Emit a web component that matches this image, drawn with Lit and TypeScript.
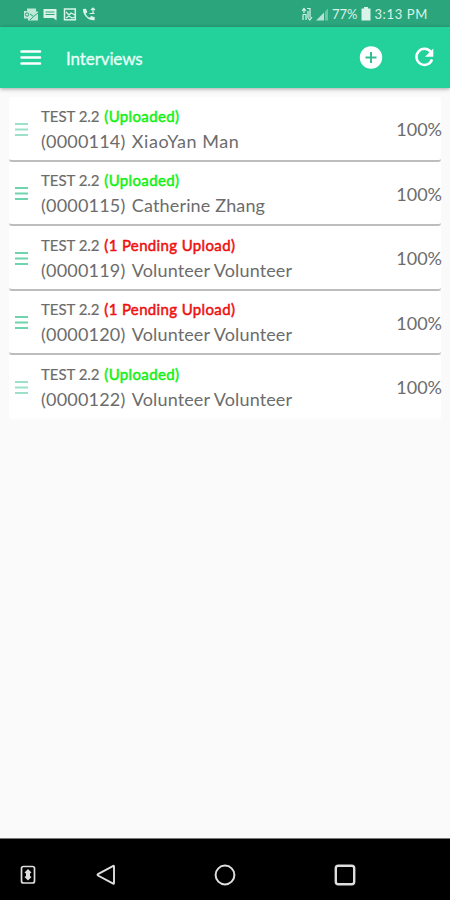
import { LitElement, html, css } from "lit";
import { customElement, property } from "lit/decorators.js";
import { classMap } from "lit/directives/class-map.js";
import { styleMap } from "lit/directives/style-map.js";

interface Interview {
  id: string;
  name: string;
  tracking: number;
  status: string;
  pending: boolean;
  faint: boolean;
}

const interviews: Interview[] = [
  { id: "0000114", name: "XiaoYan Man", tracking: 0.55, status: "Uploaded", pending: false, faint: true },
  { id: "0000115", name: "Catherine Zhang", tracking: 0.15, status: "Uploaded", pending: false, faint: false },
  { id: "0000119", name: "Volunteer Volunteer", tracking: 0.12, status: "1 Pending Upload", pending: true, faint: false },
  { id: "0000120", name: "Volunteer Volunteer", tracking: 0.12, status: "1 Pending Upload", pending: true, faint: false },
  { id: "0000122", name: "Volunteer Volunteer", tracking: 0.12, status: "Uploaded", pending: false, faint: true },
];

@customElement("interview-row")
class InterviewRow extends LitElement {
  @property({ attribute: false }) item!: Interview;

  static styles = css`
    :host {
      display: flex;
      align-items: center;
      box-sizing: border-box;
      height: 64.5px;
      padding: 2px 0 0 6px;
      background: #fff;
      border-radius: 3px;
      border-bottom: 2px solid #bdbdbd;
      color: #6c6c6c;
    }
    :host(:last-child) { border-bottom-color: #fdfdfd; }
    .handle { width: 13px; height: 15px; flex: none; margin-right: 13px; color: #6fd3ae; }
    .handle.faint { color: #9edfc7; }
    .body { flex: 1; white-space: nowrap; padding-top: 0.5px; }
    .title { font-size: 15px; line-height: 20px; height: 22px; letter-spacing: -0.05px; -webkit-text-stroke: 0.2px currentColor; }
    .status { margin-left: 1px; color: #14f014; letter-spacing: 0.36px; -webkit-text-stroke: 0.5px currentColor; }
    .status.pending { color: #ee1010; }
    .name { font-size: 18px; line-height: 26px; letter-spacing: 0.2px; }
    .person { margin-left: 1.5px; }
    .percent { font-size: 18px; letter-spacing: 0; margin-right: -1px; }
  `;

  render() {
    const i = this.item;
    return html`
      <svg class=${classMap({ handle: true, faint: i.faint })} viewBox="0 0 13 15">
        <path d="M0 2h13M0 7.5h13M0 13h13" stroke="currentColor" stroke-width="2" />
      </svg>
      <div class="body">
        <div class="title">TEST 2.2 <span class=${classMap({ status: true, pending: i.pending })}>(${i.status})</span></div>
        <div class="name">(${i.id}) <span class="person" style=${styleMap({ letterSpacing: `${i.tracking}px` })}>${i.name}</span></div>
      </div>
      <div class="percent">100%</div>
    `;
  }
}

@customElement("app-root")
class AppRoot extends LitElement {
  static styles = css`
    :host {
      display: flex;
      flex-direction: column;
      width: 450px;
      height: 900px;
      overflow: hidden;
      background: #fafafa;
      font-family: Lato, sans-serif;
    }
    svg { display: block; flex: none; }
    .status {
      height: 27px;
      flex: none;
      display: flex;
      align-items: center;
      justify-content: space-between;
      padding: 1px 22px 0 23px;
      box-sizing: border-box;
      background: #2aa57c;
      color: #d9f3e8;
      font-size: 13px;
    }
    .group { display: flex; align-items: center; white-space: nowrap; }
    .clock { letter-spacing: 0.65px; margin-left: 3px; }
    .battery { margin-left: 4px; }
    .level { margin-left: 2px; }
    .bar {
      height: 61px;
      flex: none;
      display: flex;
      align-items: center;
      box-sizing: border-box;
      padding: 0 14px 0 20px;
      background: #23d19b;
      color: #fff;
      box-shadow: 0 1px 4px rgba(0, 0, 0, 0.35);
    }
    .heading { flex: 1; margin-left: 24px; padding-top: 2px; font-size: 17px; letter-spacing: -0.1px; color: #e9fff7; -webkit-text-stroke: 0.3px currentColor; }
    .add { margin-right: 29px; }
    .list { flex: 1; padding: 9px 9px 0 9px; }
    .nav {
      height: 62px;
      flex: none;
      display: flex;
      align-items: center;
      box-sizing: border-box;
      border-top: 1px solid #777;
      padding: 10px 94px 0 20px;
      background: #000;
      color: #dedede;
    }
    .back { margin-left: 60px; }
    .home { margin-left: 98px; }
    .recent { margin-left: 98px; }
  `;

  render() {
    return html`
      <div class="status">
        <svg width="75" height="15" viewBox="0 0 75 15" fill="none" stroke="currentColor">
          <path d="M4 1.500h9v3h2v9H5v-2H1V4h3z" fill="currentColor" stroke="none" opacity=".85" />
          <path d="M7 7l3.500 2.500L15 6M7 13l3-3" stroke="#2aa57c" stroke-width="1" />
          <circle cx="4" cy="7.5" r="1.7" stroke="#2aa57c" stroke-width="1" />
          <path d="M20.500 2h13v11.500l-3-2.500h-10z" fill="currentColor" stroke="none" />
          <path d="M22.500 5h9M22.500 7.500h9" stroke="#2aa57c" stroke-width="1" />
          <rect x="41.500" y="2" width="10.800" height="10.800" stroke-width="1.500" />
          <path d="M43 5l3 3 2-2 4 2M43 11l3-2 3 2 3-1" stroke-width="1.300" />
          <path d="M60 2l3-.3 1.300 3.500-1.700 1.500c1 2 2 3 4 4l1.600-1.700 3.600 1.300-.2 3C65.500 14 59.500 8 60 2z" fill="currentColor" stroke="none" />
          <path d="M66.500 6.500h5M70 1v6M68 3l2-2 2 2" stroke-width="1.200" />
        </svg>
        <div class="group">
          <svg width="28" height="15" viewBox="0 0 28 15">
            <path d="M0 4l2-2.500L4 4M2 2v4M5 1.500h3v9M1 7.500h3v5.500M1 7.500V13M5.500 10l2.300 3L10 10M6 4v6" fill="none" stroke="currentColor" stroke-width="1.200" />
            <path d="M14 13.500L22 5.500v8z" fill="currentColor" opacity=".8" />
            <path d="M23 4.500l3-3v12h-3z" fill="currentColor" opacity=".4" />
          </svg>
          <span class="level">77%</span>
          <svg class="battery" width="10" height="14" viewBox="0 0 10 14"><path d="M3 0h4v1.500h2.500v12h-9v-12H3z" fill="currentColor" /></svg>
          <span class="clock">3:13 PM</span>
        </div>
      </div>
      <div class="bar">
        <svg width="22" height="18" viewBox="0 0 22 18"><path d="M1.500 2.500h18.500M1.500 8.500h18.500M1.500 14.500h18.500" stroke="currentColor" stroke-width="2.500" stroke-linecap="round" /></svg>
        <div class="heading">Interviews</div>
        <svg class="add" width="24" height="24" viewBox="0 0 24 24"><circle cx="12" cy="11.500" r="11.200" fill="currentColor" /><path d="M12 6v11M6.500 11.500h11" stroke="#36bd91" stroke-width="2" /></svg>
        <svg width="24" height="24" viewBox="0 0 24 24"><path d="M18.800 6A8 8 0 1 0 20 13.500" fill="none" stroke="currentColor" stroke-width="2.500" /><path d="M21.300 2.500v8.300H13z" fill="currentColor" /></svg>
      </div>
      <div class="list">${interviews.map((i) => html`<interview-row .item=${i}></interview-row>`)}</div>
      <div class="nav">
        <svg width="16" height="20" viewBox="0 0 16 20"><rect x="1.500" y="1.500" width="13" height="16.500" rx="2" fill="none" stroke="currentColor" stroke-width="1.700" /><path d="M8 4l3.500 3.500-1.500 1v2.500l1.500 1L8 15.500 4.500 12l1.500-1V8.500l-1.500-1z" fill="currentColor" /></svg>
        <svg class="back" width="20" height="22" viewBox="0 0 20 22"><path d="M17.300 1.800Q18 1.500 18 2.500V19q0 1-.8.600L2 11.500q-1-.7 0-1.400z" fill="none" stroke="currentColor" stroke-width="1.900" /></svg>
        <svg class="home" width="22" height="22" viewBox="0 0 22 22"><circle cx="11" cy="11" r="9.400" fill="none" stroke="currentColor" stroke-width="2" /></svg>
        <svg class="recent" width="22" height="22" viewBox="0 0 22 22"><rect x="1.800" y="1.800" width="18.400" height="18.400" rx="2.500" fill="none" stroke="currentColor" stroke-width="2.400" /></svg>
      </div>
    `;
  }
}
